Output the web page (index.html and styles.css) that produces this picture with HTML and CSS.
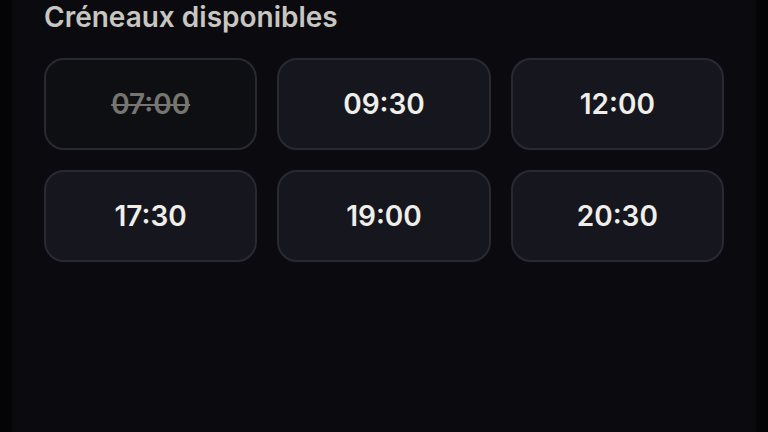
FILE: index.html
```html
<!DOCTYPE html>
<html lang="fr">
  <head>
    <meta charset="UTF-8" />
    <meta name="viewport" content="width=device-width, initial-scale=1.0" />
    <title>Créneaux</title>
    <link rel="stylesheet" href="styles.css">
  </head>
  <body>
    <div class="panel">
      <h2 class="title">Créneaux disponibles</h2>
      <div class="slots">
        <button class="slot taken" disabled>07:00</button>
        <button class="slot">09:30</button>
        <button class="slot">12:00</button>
        <button class="slot">17:30</button>
        <button class="slot">19:00</button>
        <button class="slot">20:30</button>
      </div>
    </div>
  </body>
</html>
```

FILE: styles.css
```css
* {
  box-sizing: border-box;
  margin: 0;
  padding: 0;
}

body {
  background-color: #040406;
  font-family: Inter, "Noto Sans", sans-serif;
  height: 100vh;
  overflow: hidden;
}

.panel {
  margin: 0 12px;
  height: 100%;
  background-color: #0b0b0f;
  padding: 1px 32px 0;
}

.title {
  font-size: 28px;
  line-height: 32px;
  font-weight: 600;
  color: #c8c6c1;
  margin-bottom: 25px;
}

.slots {
  display: grid;
  grid-template-columns: repeat(3, 1fr);
  gap: 20px;
}

.slot {
  height: 92px;
  border: 2px solid #292932;
  border-radius: 20px;
  background-color: #16171e;
  color: #f0eee9;
  font-family: inherit;
  font-size: 28px;
  font-weight: 600;
  cursor: pointer;
}

.slot.taken {
  background-color: #0e0f12;
  color: #77756f;
  text-decoration: line-through;
  cursor: default;
}
```
